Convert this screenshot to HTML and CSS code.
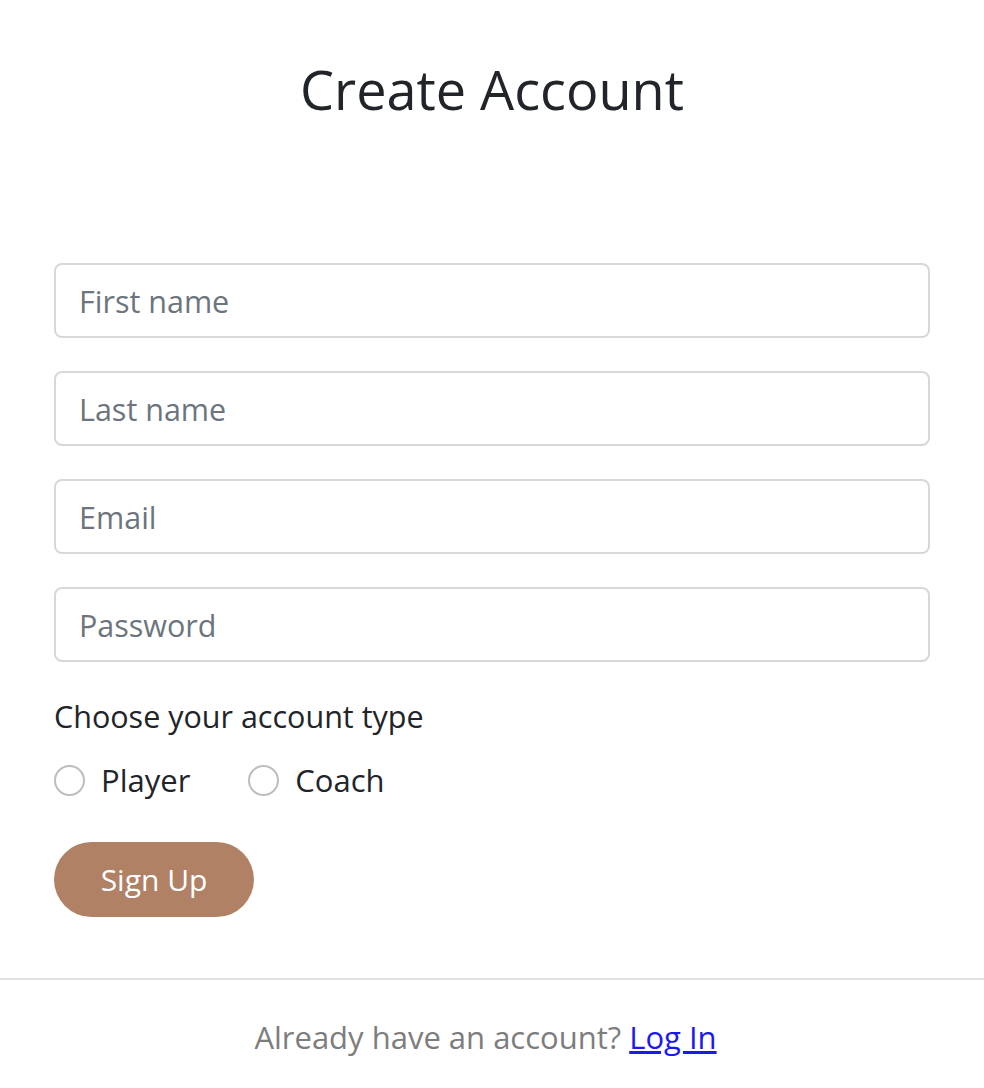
FILE: index.html
```html
<!DOCTYPE html>
<html lang="en">
<head>
<meta charset="utf-8">
<title>Create Account</title>
<link rel="stylesheet" href="styles.css">
</head>
<body>
<main class="page">
  <h1 class="title">Create Account</h1>
  <form class="form">
    <input class="field" type="text" placeholder="First name">
    <input class="field" type="text" placeholder="Last name">
    <input class="field" type="email" placeholder="Email">
    <input class="field" type="password" placeholder="Password">
    <div class="type-label">Choose your account type</div>
    <div class="radios">
      <label class="radio"><span class="dot"></span><span>Player</span></label>
      <label class="radio"><span class="dot"></span><span>Coach</span></label>
    </div>
    <button class="btn" type="button">Sign Up</button>
  </form>
  <hr class="divider">
  <p class="footer">Already have an account? <a href="#" class="link">Log In</a></p>
</main>
</body>
</html>
```
FILE: styles.css
```css
html, body { margin: 0; background: #fff; }
body { font-family: "Open Sans", "DejaVu Sans", sans-serif; color: #212529; }
.page { display: flex; flex-direction: column; }
.title {
  margin: 52px 0 0;
  font-size: 54px; font-weight: 400; line-height: 74px;
  text-align: center; color: #212529;
}
.form {
  display: flex; flex-direction: column;
  padding: 0 54px; margin-top: 137px;
}
.field {
  box-sizing: border-box; height: 75px; margin: 0 0 33px;
  border: 2px solid #d6d8db; border-radius: 8px;
  padding: 0 23px;
  font-family: inherit; font-size: 30.5px; color: #212529; background: #fff;
  outline: none;
}
.field::placeholder { color: #6c757d; }
.form .field:nth-of-type(4) { margin-bottom: 34px; }
.type-label { font-size: 30.5px; line-height: 40px; color: #212529; }
.radios { display: flex; gap: 58px; margin-top: 24px; }
.radio { display: flex; align-items: center; gap: 16px; font-size: 31px; line-height: 40px; color: #212529; }
.dot {
  box-sizing: border-box; width: 31px; height: 31px; border-radius: 50%;
  border: 2px solid #bdbdbd; background: #fff;
}
.btn {
  align-self: flex-start; margin-top: 42px;
  width: 200px; height: 75px; border: 0; border-radius: 38px;
  background: #b08165; color: #fff;
  font-family: inherit; font-size: 30px;
}
.divider { margin: 61px 0 0; border: 0; height: 2px; background: #e1e3e3; }
.footer {
  margin: 37px 0 0; padding-right: 13px; text-align: center;
  font-size: 31px; line-height: 40px; color: #7d7d7d;
}
.link { color: #1a1aee; text-decoration: underline; }
```
